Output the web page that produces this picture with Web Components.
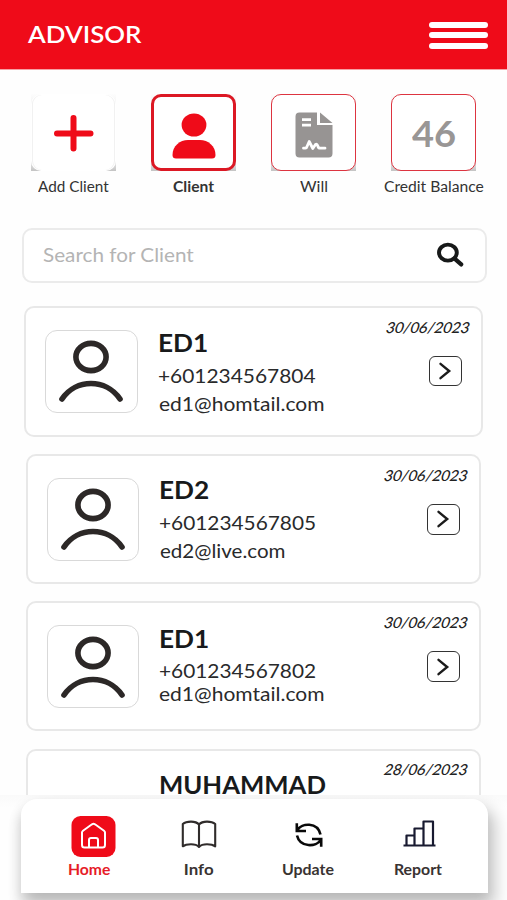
<!DOCTYPE html>
<html lang="en">
<head>
<meta charset="utf-8">
<title>Advisor</title>
<style>
html,body{margin:0;background:#fefefe}
body{font-family:Lato,"Liberation Sans",sans-serif;color:#292a2b}
</style>
</head>
<body>
<advisor-app></advisor-app>
<script>
// One line of text, stretched so its ink spans the width in "w".
class FitText extends HTMLElement{
  connectedCallback(){
    const w=+this.getAttribute('w'), s=+this.getAttribute('size'), lh=+this.getAttribute('lh')||Math.round(s*1.2);
    const wt=this.getAttribute('weight')||400, slant=this.hasAttribute('slant');
    const root=this.attachShadow({mode:'open'});
    const c=document.createElement('canvas').getContext('2d');
    c.font=`${wt} ${s}px Lato, "Liberation Sans", sans-serif`;
    const m=c.measureText(this.textContent);
    const k=(slant?w-3:w)/(m.actualBoundingBoxRight+m.actualBoundingBoxLeft);
    root.innerHTML=`<style>:host{display:block;flex:none;width:${w}px;height:${lh}px}
      span{display:inline-block;white-space:nowrap;font:${wt} ${s}px/${lh}px Lato,"Liberation Sans",sans-serif;transform-origin:0 ${lh/2+.387*s}px;transform:translateX(${m.actualBoundingBoxLeft*k}px) ${slant?'skewX(-16deg)':''} scaleX(${k})}</style><span><slot></slot></span>`;
  }
}

class AppHeader extends HTMLElement{
  constructor(){super();this.attachShadow({mode:'open'}).innerHTML=`<style>
    :host{display:flex;box-sizing:border-box;height:70px;background:#ef0b19;color:#fff;padding:20px 19px 0 27px;justify-content:space-between;align-items:flex-start;border-bottom:.5px solid #f7a0a4}
    .menu{display:grid;gap:4.3px;width:59px;padding-top:1.5px}
    i{height:6.3px;border-radius:4px;background:#fff}
    </style><slot></slot><div class="menu"><i></i><i></i><i></i></div>`}
}

class ActionTile extends HTMLElement{
  constructor(){super();this.attachShadow({mode:'open'}).innerHTML=`<style>
    :host{display:flex;flex-direction:column;align-items:center;width:120px;color:#333}
    .back{width:85px;height:77px;background:linear-gradient(#fdfdfd 0,#f1f1f1 15%,#fff 45%,#eee 85%,#c4c4c4)}
    .box{box-sizing:border-box;width:100%;height:100%;border-radius:10px;background:#fff;border:1.6px solid #dd3440;display:grid;place-items:center}
    :host([kind=plain]) .box{border-color:transparent;background-clip:border-box;box-shadow:inset 1px 0 #f1f1f1,inset -1px 0 #f1f1f1}
    :host([kind=active]) .box{border:3px solid #dc1824}
    .label{margin-top:5px}
    </style><div class="back"><div class="box"><slot name="icon"></slot></div></div><div class="label"><slot></slot></div>`}
}

class SearchBox extends HTMLElement{
  constructor(){super();this.attachShadow({mode:'open'}).innerHTML=`<style>
    :host{display:flex;box-sizing:border-box;margin:0 20.5px 0 21.5px;height:55px;border:2px solid #ebebeb;border-radius:10px;background:#fff;color:#b4b4b4;justify-content:space-between;align-items:flex-start;padding:12.7px 21px 0 19px}
    svg{display:block}
    </style><slot></slot><svg width="28" height="26" viewBox="0 0 28 26" fill="none" stroke="#171919" stroke-linecap="round"><ellipse cx="11.9" cy="10.6" rx="8.9" ry="8" stroke-width="3.9"/><path d="M18.6 16.6L25.2 22.4" stroke-width="4.2"/></svg>`}
}

class ClientCard extends HTMLElement{
  connectedCallback(){
    const a=n=>this.getAttribute(n), first=this.hasAttribute('wide');
    const [nw,pw,ew]=a('widths').split(' '), [pad,g1,g2]=a('gaps').split(' ');
    const ix=+(a('shift')||0);
    this.attachShadow({mode:'open'}).innerHTML=`<style>
    :host{display:grid;box-sizing:border-box;flex:none;grid-template-columns:92px 1fr 85px;column-gap:21px;width:${first?459:455}px;height:${a('h')}px;border:2px solid #e8e8e8;border-radius:10px;background:#fff;padding:0 11px 0 19px}
    .avatar{box-sizing:border-box;width:${first?92.5:91.5}px;height:83.5px;margin-top:21.5px;border:1.6px solid #d9d9d9;border-radius:12px;display:grid;place-items:center;background:#fff}
    .info{padding-top:${pad}px;margin-left:${first?.5:0}px}
    .phone{margin-top:${g1}px}.mail{margin-top:${g2}px}
    .mail{margin-left:${ix}px}
    .name{color:#181a1b}
    .side{display:flex;flex-direction:column;padding-top:8.6px;color:#222}
    .go{box-sizing:border-box;width:33.5px;height:30.5px;margin:21.4px 0 0 43.500px;border:1.6px solid #333;border-radius:6px;display:grid;place-items:center}
    svg{display:block}
    </style>
    ${a('phone')?`<div class="avatar"><svg width="68" height="66" viewBox="0 0 68 66" fill="none" stroke="#2c2827" stroke-width="5.6" stroke-linecap="round"><ellipse cx="34" cy="19" rx="15.1" ry="13.6"/><path d="M5 61C19 40.4 49 40.4 63 61"/></svg></div>`:`<div></div>`}
    <div class="info"><fit-text class="name" w="${nw}" size="24.3" lh="${a('phone')?28:22}" weight="700">${a('name')}</fit-text>
    ${a('phone')?`<fit-text class="phone" w="${pw}" size="20" lh="24">${a('phone')}</fit-text><fit-text class="mail" w="${ew}" size="20" lh="24">${a('mail')}</fit-text>`:''}</div>
    <div class="side"><fit-text w="85.5" size="15" lh="18" weight="500" slant>${a('date')}</fit-text>
    ${a('phone')?`<div class="go"><svg width="14" height="20" viewBox="0 0 14 20" fill="none" stroke="#1b1b1b" stroke-width="2.4" stroke-linecap="round" stroke-linejoin="miter"><path d="M2.5 2.8L11.2 10L2.5 17.2"/></svg></div>`:''}</div>`;
  }
}

class NavItem extends HTMLElement{
  constructor(){super();this.attachShadow({mode:'open'}).innerHTML=`<style>
    :host{display:flex;flex-direction:column;align-items:center;width:109.5px;color:#393332}
    :host([active]){color:#e61c28}
    .icon{height:41px;width:44px;display:grid;place-items:center;border-radius:9px;margin-bottom:2px}
    :host([active]) .icon{background:#ef0b19;transform:translateX(3.5px)}
    </style><div class="icon"><slot name="icon"></slot></div><slot></slot>`}
}

class BottomNav extends HTMLElement{
  constructor(){super();this.attachShadow({mode:'open'}).innerHTML=`<style>
    :host{display:flex;box-sizing:border-box;height:105px;padding:4px 19.5px 7px 20.5px;background:linear-gradient(#fafafa,#fefefe 12%);overflow:hidden}
    .bar{display:flex;flex:1;border-radius:16px 16px 0 0;background:#fff;box-shadow:5px 10px 16px 2px #0000003a,-3px 8px 12px #00000012;padding:16.5px 0 0 14.5px}
    </style><div class="bar"><slot></slot></div>`}
}

class AdvisorApp extends HTMLElement{
  constructor(){super();this.attachShadow({mode:'open'}).innerHTML=`<style>
    :host{display:flex;flex-direction:column;width:507px;height:900px;overflow:hidden;background:#fefefe}
    app-header,search-box,bottom-nav{flex:none}
    bottom-nav{z-index:1}
    .tiles{display:flex;flex:none;margin:23.5px 0 0 13.5px;height:134px}
    .list{display:flex;flex-direction:column;align-items:center;box-sizing:border-box;flex:1;min-height:0;padding-top:23.5px;gap:17.2px}
    svg{display:block}
    .count{color:#999695}
    </style>
    <app-header><fit-text w="114.5" size="23.6" lh="29" weight="600">ADVISOR</fit-text></app-header>
    <div class="tiles">
      <action-tile kind="plain"><svg slot="icon" width="42" height="40" viewBox="0 0 42 40" stroke="#ef0b19" stroke-width="6" stroke-linecap="round"><path d="M4 21.5H37.5M20.5 6V36.5"/></svg><fit-text w="71.5" size="14.8" lh="18">Add Client</fit-text></action-tile>
      <action-tile kind="active"><svg slot="icon" width="44" height="46" viewBox="0 0 44 46" fill="#ef0b19" style="margin-top:7px"><ellipse cx="22" cy="12" rx="12.4" ry="11.5"/><path d="M.5 42C.5 33 8 27 16 27H28C36 27 43.5 33 43.5 42Q43.5 45.5 40 45.5H4Q.5 45.5 .5 42Z"/></svg><fit-text w="41.5" size="14.8" lh="18" weight="700">Client</fit-text></action-tile>
      <action-tile><svg slot="icon" width="38" height="46" viewBox="0 0 38 46" style="margin-top:5px"><path fill="#979493" d="M4.5.5H22V13H37.5V41.5Q37.5 45.5 33.5 45.5H4.5Q.5 45.5 .5 41.5V4.5Q.5.5 4.5.5ZM25 .5L37.5 11H25Z"/><path fill="none" stroke="#fff" stroke-width="2.8" d="M7 7.7H16M7 13.2H16"/><path fill="none" stroke="#fff" stroke-width="2.8" stroke-linejoin="round" stroke-linecap="round" d="M8.5 36.2H10.5Q11.5 36.2 12 34.5L14.2 29.5L17.8 36.5L20.5 32.5Q22 31.5 22.8 34Q23.5 36.2 25 36.2H30"/></svg><fit-text w="27.5" size="14.8" lh="18">Will</fit-text></action-tile>
      <action-tile><fit-text slot="icon" class="count" w="43.5" size="35.5" lh="42" weight="700" style="margin-top:3px">46</fit-text><fit-text w="100" size="14.8" lh="18">Credit Balance</fit-text></action-tile>
    </div>
    <search-box><fit-text w="151" size="20" lh="24">Search for Client</fit-text></search-box>
    <div class="list">
      <client-card wide h="131" name="ED1" phone="+601234567804" mail="ed1@homtail.com" date="30/06/2023" widths="48 157 165" gaps="21 6.4 4"></client-card>
      <client-card h="130" name="ED2" phone="+601234567805" mail="ed2@live.com" date="30/06/2023" widths="48 155.5 125" gaps="19.8 5.8 4.3"></client-card>
      <client-card h="130" name="ED1" phone="+601234567802" mail="ed1@homtail.com" date="30/06/2023" widths="48 155.5 165" gaps="21.2 5 -0.3" shift="-1.5"></client-card>
      <client-card h="130" name="MUHAMMAD" date="28/06/2023" widths="165.5 0 0" gaps="23 0 0"></client-card>
    </div>
    <bottom-nav>
      <nav-item active><svg slot="icon" width="26" height="28" viewBox="0 0 26 28" fill="none" stroke="#fff" stroke-width="2" stroke-linejoin="round"><path d="M1.5 10.5Q1.5 9.5 2.5 8.7L11.5 2.3Q13 1.3 14.5 2.3L23.5 8.7Q24.5 9.5 24.5 10.5V23Q24.5 25.5 22 25.5H4Q1.5 25.5 1.5 23ZM8.5 25.5V18Q8.5 16 10.5 16H15.5Q17.5 16 17.5 18V25.5"/></svg><fit-text w="41.5" size="14.8" lh="18" weight="700">Home</fit-text></nav-item>
      <nav-item><svg slot="icon" width="36" height="29" viewBox="0 0 36 29" fill="none" stroke="#302c2b" stroke-width="2.1" stroke-linejoin="round" style="margin-top:-3px"><path d="M18 4.5Q15.5 1.6 10 1.6Q4.5 1.6 1.8 4V26.3Q4.5 24.3 10 24.3Q15.5 24.3 18 27Q20.5 24.3 26 24.3Q31.5 24.3 34.2 26.3V4Q31.5 1.6 26 1.6Q20.5 1.6 18 4.5V27"/></svg><fit-text w="28" size="14.8" lh="18" weight="700">Info</fit-text></nav-item>
      <nav-item><svg slot="icon" width="28" height="26" viewBox="0 0 28 26" fill="none" stroke="#090909" stroke-width="2.6" style="margin:-3px 0 0 0"><path d="M1.8 1.2V9H11M2.3 8C6.5 1 22.5-.5 25.5 12.5M26.2 24.8V17H17M25.7 18C21.5 25 5 26 2 13.5"/></svg><fit-text w="51" size="14.8" lh="18" weight="700">Update</fit-text></nav-item>
      <nav-item><svg slot="icon" width="33" height="27" viewBox="0 0 33 27" fill="none" stroke="#181a30" stroke-width="2.2" stroke-linejoin="round" style="margin:-5px 0 0 3px"><path d="M.5 25.5H32.5M3.5 25.5V15.5H11.5M11.5 25.5V8.5H20.5M20.5 25.5V1.5H30V25.5"/></svg><fit-text w="47.5" size="14.8" lh="18" weight="700">Report</fit-text></nav-item>
    </bottom-nav>`}
}
for(const [n,c] of Object.entries({'fit-text':FitText,'app-header':AppHeader,'action-tile':ActionTile,'search-box':SearchBox,'client-card':ClientCard,'nav-item':NavItem,'bottom-nav':BottomNav,'advisor-app':AdvisorApp}))customElements.define(n,c);
</script>
</body>
</html>
